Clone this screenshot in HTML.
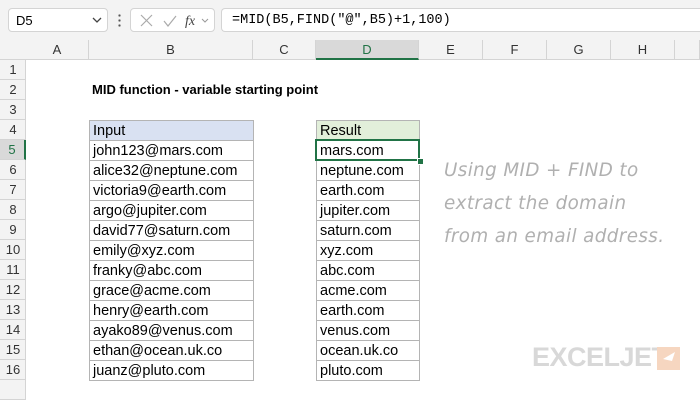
<!DOCTYPE html><html><head><style>
body{margin:0;width:700px;height:400px;overflow:hidden;background:#fff;font-family:"Liberation Sans",sans-serif;position:relative}
.a{position:absolute}
.t{font-size:14.5px;color:#000}
</style></head><body>
<div class="a" style="left:0;top:0;width:700px;height:40px;background:#f3f3f3"></div>
<div class="a" style="left:8px;top:8px;width:100px;height:24px;background:#fff;border:1px solid #d4d4d4;border-radius:4px;box-sizing:border-box;font-size:13px;padding:4px 0 0 7px">D5</div>
<svg class="a" style="left:92px;top:16px" width="10" height="8"><path d="M1 2 L5 6 L9 2" stroke="#444" fill="none" stroke-width="1.3"/></svg>
<div class="a" style="left:118px;top:13px;width:3px;height:14px;background:radial-gradient(circle,#555 1px,transparent 1.3px) 0 0/3px 5px"></div>
<div class="a" style="left:130px;top:8px;width:85px;height:24px;background:#fff;border:1px solid #d4d4d4;border-radius:4px;box-sizing:border-box"></div>
<svg class="a" style="left:138px;top:13px" width="80" height="16"><path d="M3 2 L14 13 M14 2 L3 13" stroke="#aaa" stroke-width="1.2"/><path d="M26 8 L30 13 L38 3" stroke="#aaa" fill="none" stroke-width="1.2"/><text x="47" y="12" font-family="Liberation Serif" font-style="italic" font-size="14" fill="#444">fx</text><path d="M64 6 L67 9 L70 6" stroke="#999" fill="none"/></svg>
<div class="a" style="left:221px;top:8px;width:479px;height:24px;background:#fff;border:1px solid #d4d4d4;border-right:none;border-radius:4px 0 0 4px;box-sizing:border-box;font-family:'Liberation Mono',monospace;font-size:13.5px;padding:4px 0 0 10px">=MID(B5,FIND("@",B5)+1,100)</div>
<div class="a" style="left:0;top:40px;width:700px;height:20px;background:#f3f3f3;border-bottom:1px solid #d4d4d4;box-sizing:border-box"></div>
<div class="a" style="left:0;top:60px;width:26px;height:340px;background:#f3f3f3;border-right:1px solid #d4d4d4;box-sizing:border-box"></div>
<div id="g"></div>
<script>
var cols=[["A",26,89],["B",89,253],["C",253,316],["D",316,419],["E",419,483],["F",483,547],["G",547,611],["H",611,675],["",675,700]],h="";
cols.forEach(function(c){h+='<div class="a" style="left:'+c[1]+'px;top:40px;width:'+(c[2]-c[1])+'px;height:20px;border-right:1px solid #d4d4d4;box-sizing:border-box;text-align:center;font-size:13px;line-height:20px;color:#333;'+(c[0]=="D"?'background:#d9d9d9;border-bottom:2px solid #217346;color:#217346':'')+'">'+c[0]+'</div>';});
for(var r=1;r<=17;r++){var y=40+r*20;h+='<div class="a" style="left:0;top:'+y+'px;width:26px;height:20px;border-bottom:1px solid #d4d4d4;box-sizing:border-box;text-align:center;font-size:13px;line-height:20px;color:#333;'+(r==5?'background:#d9d9d9;border-right:2px solid #217346;color:#217346':'')+'">'+(r<17?r:'')+'</div>';}
var inp=["john123@mars.com","alice32@neptune.com","victoria9@earth.com","argo@jupiter.com","david77@saturn.com","emily@xyz.com","franky@abc.com","grace@acme.com","henry@earth.com","ayako89@venus.com","ethan@ocean.uk.co","juanz@pluto.com"];
var out=inp.map(function(s){return s.split("@")[1]});
function cell(x,y,w,t,bg){return '<div class="a t" style="left:'+x+'px;top:'+y+'px;width:'+w+'px;height:21px;border:1px solid #b4b4b4;box-sizing:border-box;padding-left:3px;line-height:20px;white-space:nowrap;background:'+bg+'">'+t+'</div>';}
h+=cell(89,120,165,"Input","#d9e1f2");h+=cell(316,120,104,"Result","#e2efda");
for(var i=0;i<12;i++){h+=cell(89,140+i*20,165,inp[i],"#fff");h+=cell(316,140+i*20,104,out[i],"#fff");}
document.getElementById("g").innerHTML=h;
</script>
<div class="a" style="left:315px;top:139px;width:105px;height:22px;border:2px solid #217346;box-sizing:border-box"></div>
<div class="a" style="left:417px;top:158px;width:5px;height:5px;background:#217346;border:1px solid #fff"></div>
<div class="a" style="left:92px;top:82px;font-size:13px;font-weight:bold">MID function - variable starting point</div>
<div class="a" style="left:444px;top:154px;font-family:'DejaVu Sans',sans-serif;font-size:18.3px;line-height:33px;color:#b0b0b0;font-style:italic;letter-spacing:0.4px">Using MID + FIND to<br>extract the domain<br>from an email address.</div>
<div class="a" style="left:532px;top:342px;font-size:27px;font-weight:bold;color:#d8d8d8;letter-spacing:-0.5px">EXCELJET</div>
<div class="a" style="left:657px;top:347px;width:23px;height:23px;background:#f6d6c0"></div>
<svg class="a" style="left:657px;top:347px" width="23" height="23"><path d="M18 5 L6 12 L15 14 Z" fill="#fff"/></svg>
</body></html>
